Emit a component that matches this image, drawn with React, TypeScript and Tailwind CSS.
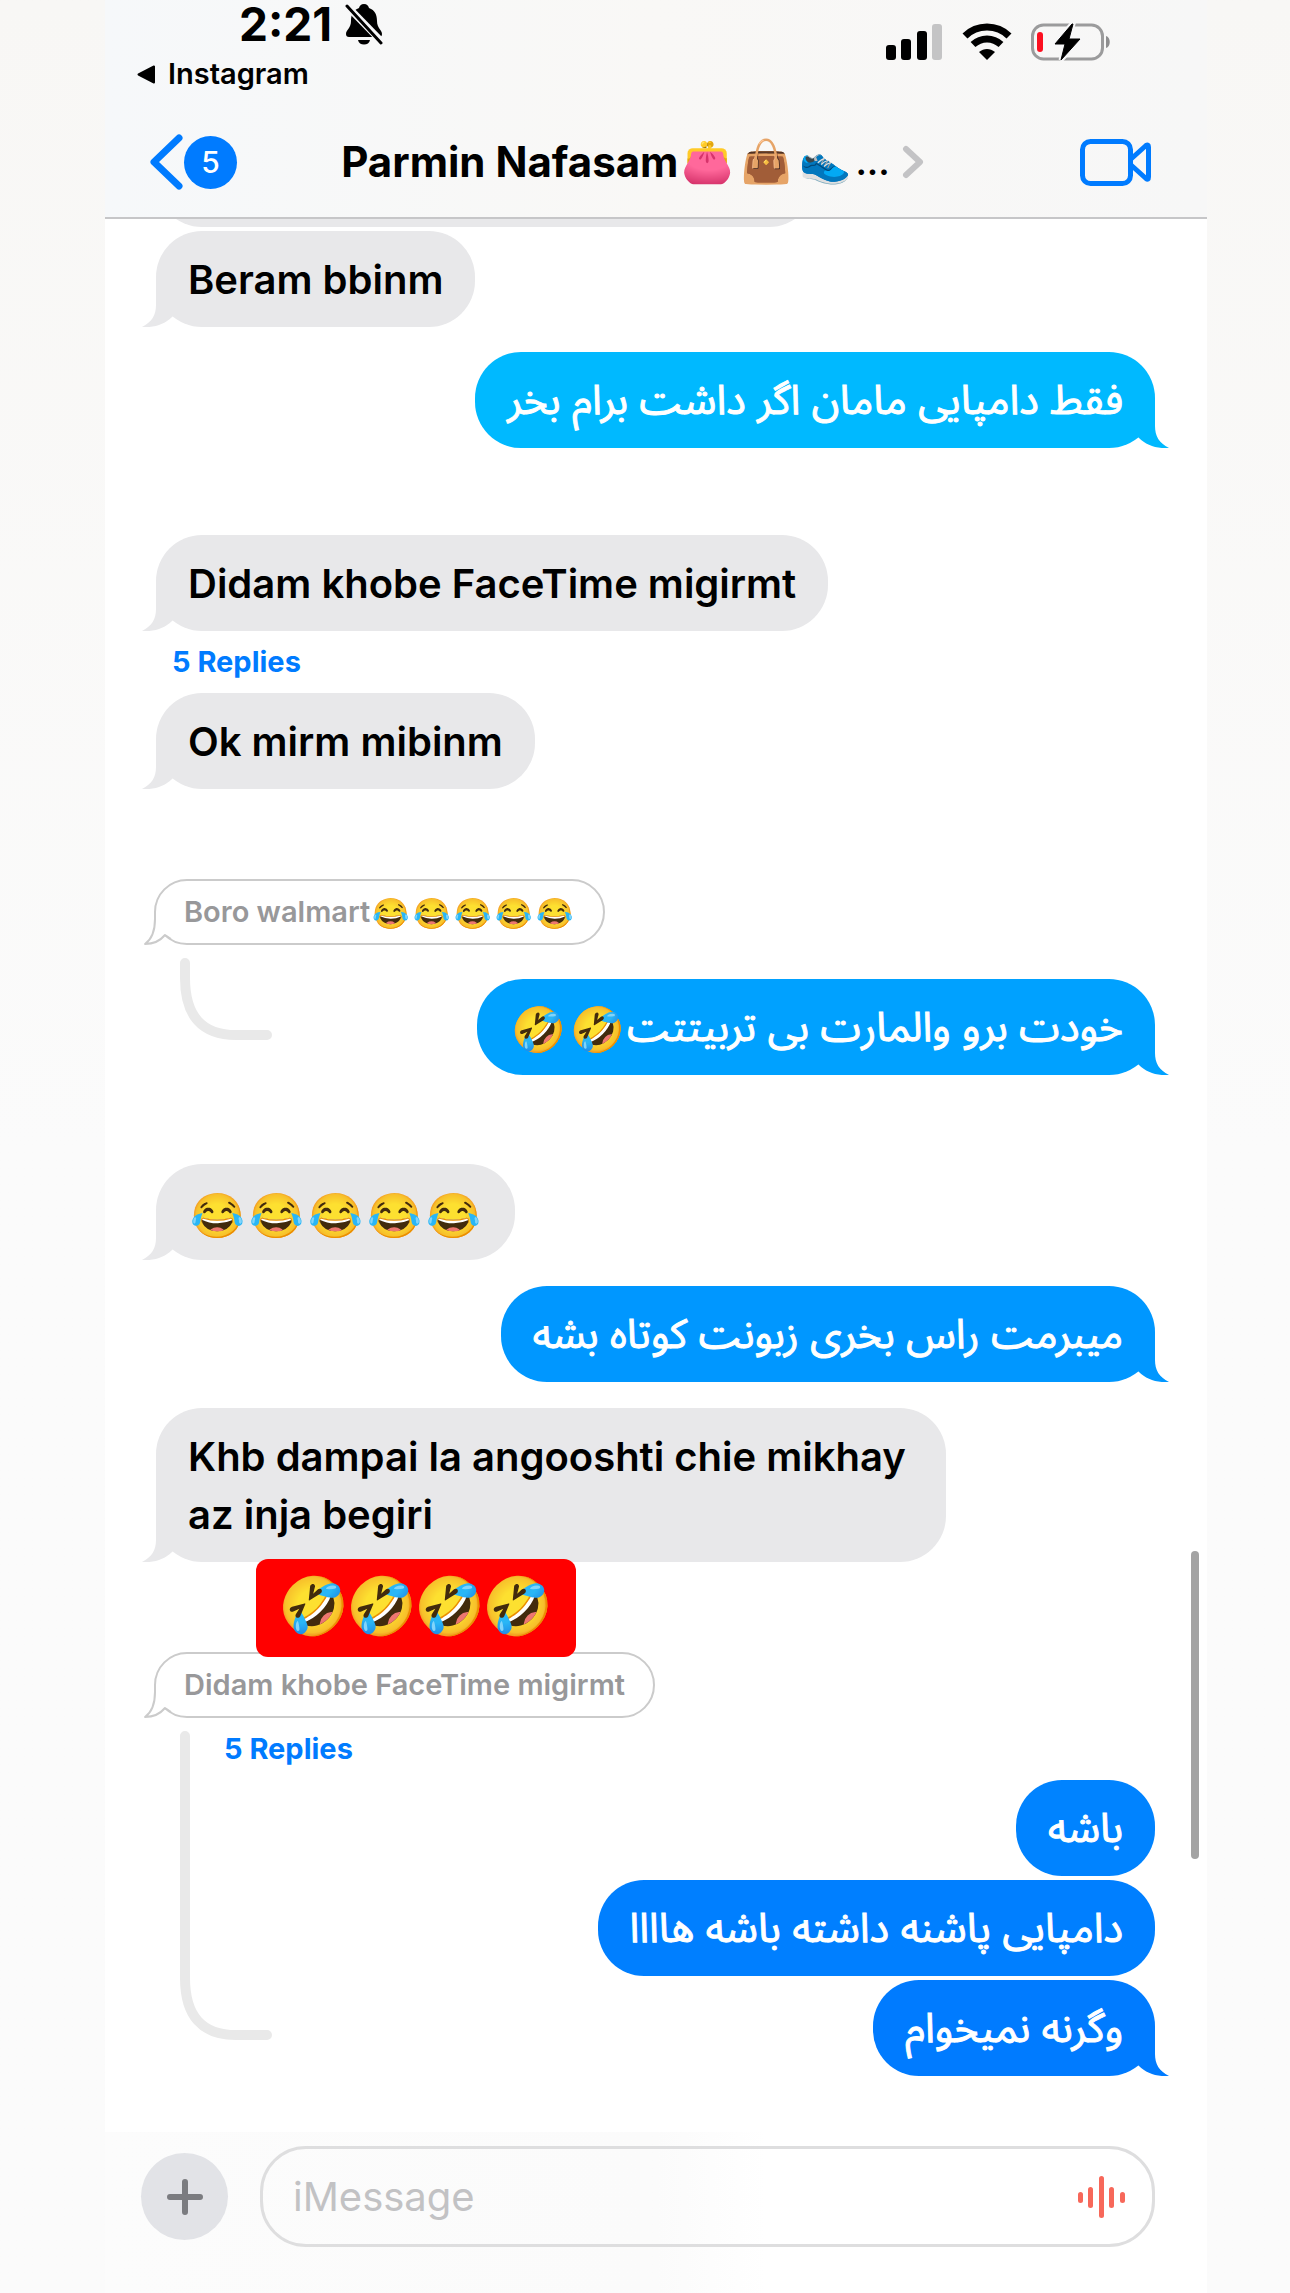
import { FC, ReactNode } from "react";

const font = "font-['Inter','Noto_Sans_Arabic','DejaVu_Sans','Noto_Color_Emoji',sans-serif]";

const Emojis: FC<{ list: string[], className: string }> = ({ list, className }) => {
	return <>{list.map((e, i) => <span key={i} className={"inline-flex justify-center align-middle leading-none font-['Noto_Color_Emoji',sans-serif] " + className}>{e}</span>)}</>
}

const Tail: FC<{ color: string, side: "left" | "right" }> = ({ color, side }) => {
	return <svg
		className={"absolute bottom-0 " + (side === "left" ? "-left-[14px]" : "-right-[14px] -scale-x-100")}
		width="46" height="48" viewBox="0 0 46 48" fill={color}
	>
		<path d="M14 0V26C14 36 10 43 0 48C12 49 23 45 30 38L44 24Z" />
	</svg>
}

const Incoming: FC<{ children?: ReactNode, className?: string }> = ({ children, className = "" }) => {
	return <div className={"relative self-start rounded-[46px] bg-[#e8e8ea] px-8 pt-5 pb-[18px] text-[40px] leading-[58px] font-semibold text-black " + className}>
		{children}
		<Tail color="#e8e8ea" side="left" />
	</div>
}

const Outgoing: FC<{ children: ReactNode, color: string, tail?: boolean, className?: string }> = ({ children, color, tail = true, className = "" }) => {
	return <div dir="rtl" className={"relative self-end rounded-[46px] px-8 pt-[18px] pb-5 text-[41px] leading-[58px] text-white [-webkit-text-stroke:1px_#fff] " + className} style={{ backgroundColor: color }}>
		{children}
		{tail && <Tail color={color} side="right" />}
	</div>
}

const Quoted: FC<{ children: ReactNode, className?: string }> = ({ children, className = "" }) => {
	return <div className={"relative -ml-[2px] self-start rounded-full border-2 border-[#cbcbcb] bg-white px-7 text-[29px] leading-[62px] font-semibold text-[#98989a] " + className}>
		{children}
		<svg className="absolute -bottom-[2px] -left-[13px]" width="32" height="36" viewBox="0 0 32 36">
			<path d="M12 3V10C12 22 9 30 1 35C10 35 18 32 23 26L27 22L15 3Z" fill="#fff" />
			<path d="M12 2V10C12 22 9 30 2 35C10 35 17 32 22 26L28 30" fill="none" stroke="#cbcbcb" strokeWidth="2" strokeLinejoin="round" />
		</svg>
	</div>
}

const ThreadLine: FC<{ height: number }> = ({ height }) => {
	return <svg className="mt-[13px] ml-6 shrink-0" width="92" height={height} viewBox={`0 0 92 ${height}`} fill="none">
		<path d={`M5 5V${height - 62}C5 ${height - 24} 22 ${height - 5} 56 ${height - 5}H87`} stroke="#e9e9e9" strokeWidth="10" strokeLinecap="round" />
	</svg>
}

const BellOff: FC = () => {
	return <svg width="40" height="42" viewBox="0 0 40 42" fill="#000">
		<path d="M20 1C17 1 15.500 3 15 5C9 7 7 12 7 18C7 25 2 27 2 31C2 33 3 34 5 34H35C37 34 38 33 38 31C38 27 33 25 33 18C33 12 31 7 25 5C24.500 3 23 1 20 1Z" />
		<path d="M14 37H26C25.500 40 23 41.500 20 41.500C17 41.500 14.500 40 14 37Z" />
		<path d="M1 1L39 40" stroke="#f7f7f8" strokeWidth="7" />
		<path d="M3 3L37 40" stroke="#000" strokeWidth="3" strokeLinecap="round" />
	</svg>
}

const StatusIcons: FC = () => {
	return <div className="flex items-center gap-[19px]">
		<svg width="57" height="38" viewBox="0 0 57 38" fill="#000">
			<rect x="0" y="22" width="10" height="15" rx="3" />
			<rect x="15" y="16" width="10" height="21" rx="3" />
			<rect x="31" y="8" width="10" height="29" rx="3" />
			<rect x="46" y="1" width="10" height="36" rx="3" fill="#c4c4c5" />
		</svg>
		<svg width="50" height="38" viewBox="0 0 50 38" fill="none" stroke="#000" strokeWidth="7">
			<path d="M3 13C15 1 35 1 47 13" />
			<path d="M11 21.500C19 14 31 14 39 21.500" />
			<path d="M25 37L17 29C22 25 28 25 33 29Z" fill="#000" stroke="none" />
		</svg>
		<svg width="80" height="38" viewBox="0 0 80 38">
			<rect x="1.500" y="2" width="70" height="34" rx="11" fill="none" stroke="#9b9b9c" strokeWidth="3" />
			<path d="M75 13C80 14 80 24 75 25Z" fill="#8e8e8f" />
			<rect x="6" y="9" width="6" height="20" rx="3" fill="#fc1020" />
			<path d="M41 1L24 21H34L30 37L49 16H38L42 1Z" fill="#000" stroke="#f7f7f8" strokeWidth="5" />
			<path d="M41 1L24 21H34L30 37L49 16H38L42 1Z" fill="#000" stroke="#000" strokeWidth="1" strokeLinejoin="round" />
		</svg>
	</div>
}

const Header: FC = () => {
	return <header className="border-b-2 border-[#c6c6c8] bg-linear-to-r from-[#f6f8fa] via-[#f9f8f6] to-[#f7f7f7]">
		<div className="flex h-[92px] justify-between">
			<div className="pl-8">
				<div className="flex h-12 items-center gap-3 pl-[102px] text-[46px] leading-[48px] font-bold text-black">
					<span>2:21</span>
					<BellOff />
				</div>
				<a href="#instagram" className="flex items-center gap-3 text-[29px] leading-[52px] font-semibold text-black">
					<svg width="19" height="19" viewBox="0 0 19 19"><path d="M17 1.500V17.500L1.500 9.500Z" stroke="#000" strokeWidth="2" strokeLinejoin="round" /></svg>
					Instagram
				</a>
			</div>
			<div className="pt-[23px] pr-24"><StatusIcons /></div>
		</div>
		<div className="flex h-[125px] items-center justify-between pt-[15px] pr-14 pl-11">
			<button aria-label="Back" className="flex items-center gap-px">
				<svg width="34" height="58" viewBox="0 0 34 58" fill="none" stroke="#007bff" strokeWidth="7" strokeLinecap="round" strokeLinejoin="round">
					<path d="M30 5L5 29L30 53" />
				</svg>
				<span className="flex h-[53px] w-[53px] items-center justify-center rounded-full bg-[#007bff] text-[30px] font-medium text-white">5</span>
			</button>
			<button className="mr-[52px] flex items-center text-[42px] leading-[58px] font-bold text-black">
				<span>Parmin Nafasam</span>
				<Emojis list={["👛", "👜", "👟"]} className="w-[59px]" />
				<span className="text-[36px] font-semibold">...</span>
				<svg className="ml-3" width="22" height="34" viewBox="0 0 22 34" fill="none" stroke="#c3c3c5" strokeWidth="6" strokeLinecap="round" strokeLinejoin="round">
					<path d="M4 4L18 17L4 30" />
				</svg>
			</button>
			<button aria-label="Video call">
				<svg width="71" height="47" viewBox="0 0 71 47" fill="none" stroke="#007bff" strokeWidth="5" strokeLinejoin="round">
					<rect x="2.500" y="2.500" width="48" height="42" rx="8" />
					<path d="M51 20L66 6.500Q68.500 5 68.500 8V38Q68.500 41.500 66 39.500L51 26" />
				</svg>
			</button>
		</div>
	</header>
}

const Composer: FC = () => {
	return <form className="flex items-center gap-8 bg-linear-to-r from-[#fcfcfc] via-[#fbfbfb] to-white to-60% pt-[14px] pr-[52px] pb-[46px] pl-9">
		<button type="button" aria-label="Add" className="flex size-[87px] shrink-0 items-center justify-center rounded-full bg-[#e2e3e7]">
			<svg width="36" height="36" viewBox="0 0 36 36" stroke="#7b7c80" strokeWidth="6" strokeLinecap="round"><path d="M18 3V33M3 18H33" /></svg>
		</button>
		<div className="flex h-[101px] min-w-0 flex-1 items-center rounded-[46px] border-[3px] border-[#dededf] pr-[26px] pl-[30px]">
			<input aria-label="iMessage" placeholder="iMessage" className="min-w-0 flex-1 bg-transparent text-[40px] outline-none placeholder:text-[#c2c2c4]" />
			<button type="button" aria-label="Dictate">
				<svg width="48" height="42" viewBox="0 0 48 42" fill="#f7685a">
					<rect x="0" y="16" width="5" height="11" rx="2.500" />
					<rect x="10" y="11" width="5" height="21" rx="2.500" />
					<rect x="21" y="0" width="5" height="42" rx="2.500" />
					<rect x="31" y="11" width="5" height="21" rx="2.500" />
					<rect x="42" y="16" width="5" height="11" rx="2.500" />
				</svg>
			</button>
		</div>
	</form>
}

export default function App() {
	return <div className={"min-h-screen bg-linear-to-b from-[#f8f7f5] via-[#fbfbfb] to-[#fbfbfb] pr-[83px] pl-[105px] " + font}>
		<div className="relative flex min-h-screen flex-col bg-white">
			<Header />
			<main className="flex flex-1 flex-col pr-[52px] pl-[51px]">
				<div className="flex h-2 items-end overflow-hidden">
					<div className="h-24 w-[66%] shrink-0 rounded-[46px] bg-[#e8e8ea]" />
				</div>
				<Incoming className="mt-1">Beram bbinm</Incoming>
				<Outgoing color="#00b9ff" className="mt-[25px]">فقط دامپایی مامان اگر داشت برام بخر</Outgoing>
				<Incoming className="mt-[87px]">Didam khobe FaceTime migirmt</Incoming>
				<a href="#replies" className="self-start pl-4 text-[29px] leading-[62px] font-bold text-[#007bff]">5 Replies</a>
				<Incoming>Ok mirm mibinm</Incoming>

				<Quoted className="mt-[90px]">
					Boro walmart<Emojis list={["😂", "😂", "😂", "😂", "😂"]} className="w-[41px] text-[30px]" />
				</Quoted>
				<div className="flex justify-between">
					<ThreadLine height={82} />
					<Outgoing color="#00a1ff" className="mt-[34px]">
						خودت برو والمارت بی تربیتتت<Emojis list={["🤣", "🤣"]} className="w-[59px] text-[44px]" />
					</Outgoing>
				</div>

				<Incoming className="mt-[89px]"><Emojis list={["😂", "😂", "😂", "😂", "😂"]} className="w-[59px] text-[44px]" /></Incoming>
				<Outgoing color="#0097ff" className="mt-[26px]">میبرمت راس بخری زبونت کوتاه بشه</Outgoing>
				<Incoming className="mt-[26px] max-w-[790px]">
					Khb dampai la angooshti chie mikhay az inja begiri
					<div className="absolute top-[151px] left-[100px] z-10 flex h-[98px] w-80 items-center justify-center rounded-xl bg-[#ff0000] pb-1">
						<Emojis list={["🤣", "🤣", "🤣", "🤣"]} className="w-[68px] text-[57px]" />
					</div>
				</Incoming>

				<Quoted className="mt-[90px]">Didam khobe FaceTime migirmt</Quoted>
				<div className="flex">
					<ThreadLine height={309} />
					<div className="flex flex-1 flex-col gap-1">
						<a href="#replies" className="-mb-1 -ml-12 self-start text-[29px] leading-[62px] font-bold text-[#007bff]">5 Replies</a>
						<Outgoing color="#0083ff" tail={false}>باشه</Outgoing>
						<Outgoing color="#007fff" tail={false}>دامپایی پاشنه داشته باشه هاااا</Outgoing>
						<Outgoing color="#007bff">وگرنه نمیخوام</Outgoing>
					</div>
				</div>
			</main>
			<Composer />
			<div className="absolute right-2 bottom-[434px] h-[308px] w-2 rounded-full bg-[#a3a3a3]" />
		</div>
	</div>
}
